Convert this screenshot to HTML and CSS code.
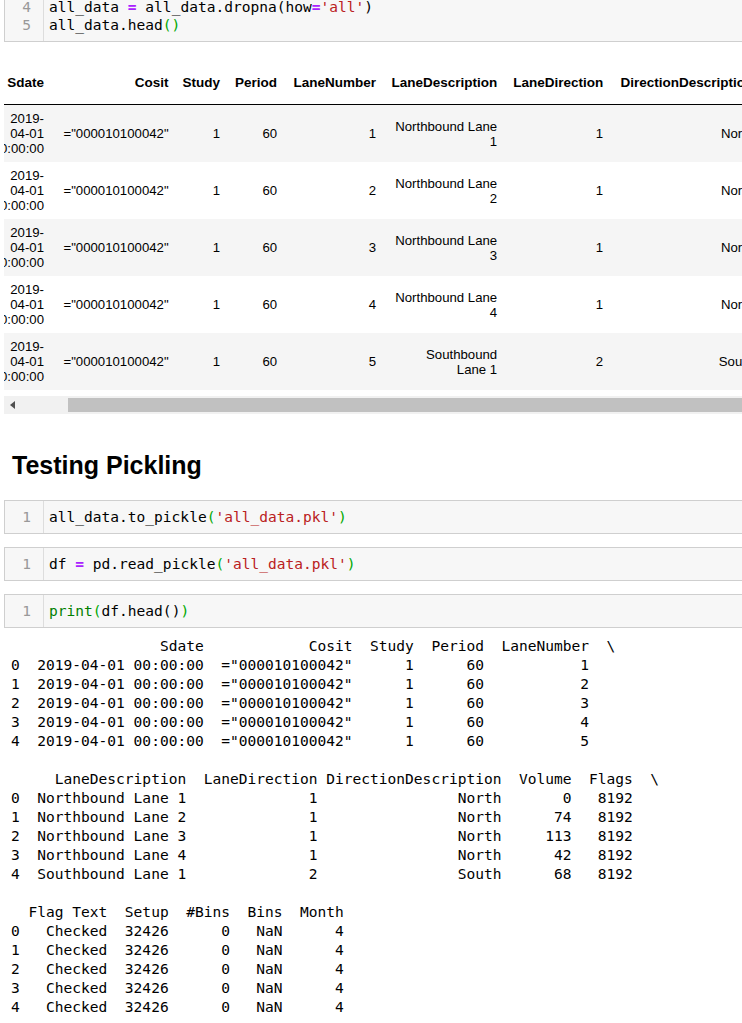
FILE: index.html
```html
<!DOCTYPE html>
<html>
<head>
<meta charset="utf-8">
<title>Notebook</title>
<link rel="stylesheet" href="styles.css">
</head>
<body>
<div class="notebook">

  <div class="cell cell-first">
    <div class="gutter"><div>4</div><div>5</div></div>
    <div class="code">
      <div class="line">all_data <span class="op">=</span> all_data.dropna(how<span class="op">=</span><span class="str">'all'</span>)</div>
      <div class="line">all_data.head<span class="br">()</span></div>
    </div>
  </div>

  <div class="df-wrap">
    <table class="dataframe">
      <colgroup>
        <col class="c-sdate"><col class="c-cosit"><col class="c-study"><col class="c-period"><col class="c-lnum"><col class="c-ldesc"><col class="c-ldir"><col class="c-ddesc"><col class="c-vol"><col class="c-flags"><col class="c-ftext"><col class="c-setup"><col class="c-nbins"><col class="c-bins"><col class="c-month">
      </colgroup>
      <thead>
        <tr><th>Sdate</th><th>Cosit</th><th>Study</th><th>Period</th><th>LaneNumber</th><th>LaneDescription</th><th>LaneDirection</th><th>DirectionDescription</th><th>Volume</th><th>Flags</th><th>Flag Text</th><th>Setup</th><th>#Bins</th><th>Bins</th><th>Month</th></tr>
      </thead>
      <tbody>
        <tr><td>2019-<br>04-01<br>00:00:00</td><td>="000010100042"</td><td>1</td><td>60</td><td>1</td><td>Northbound Lane<br>1</td><td>1</td><td>North</td><td>0</td><td>8192</td><td>Checked</td><td>32426</td><td>0</td><td>NaN</td><td>4</td></tr>
        <tr><td>2019-<br>04-01<br>00:00:00</td><td>="000010100042"</td><td>1</td><td>60</td><td>2</td><td>Northbound Lane<br>2</td><td>1</td><td>North</td><td>74</td><td>8192</td><td>Checked</td><td>32426</td><td>0</td><td>NaN</td><td>4</td></tr>
        <tr><td>2019-<br>04-01<br>00:00:00</td><td>="000010100042"</td><td>1</td><td>60</td><td>3</td><td>Northbound Lane<br>3</td><td>1</td><td>North</td><td>113</td><td>8192</td><td>Checked</td><td>32426</td><td>0</td><td>NaN</td><td>4</td></tr>
        <tr><td>2019-<br>04-01<br>00:00:00</td><td>="000010100042"</td><td>1</td><td>60</td><td>4</td><td>Northbound Lane<br>4</td><td>1</td><td>North</td><td>42</td><td>8192</td><td>Checked</td><td>32426</td><td>0</td><td>NaN</td><td>4</td></tr>
        <tr><td>2019-<br>04-01<br>00:00:00</td><td>="000010100042"</td><td>1</td><td>60</td><td>5</td><td>Southbound<br>Lane 1</td><td>2</td><td>South</td><td>68</td><td>8192</td><td>Checked</td><td>32426</td><td>0</td><td>NaN</td><td>4</td></tr>
      </tbody>
    </table>
  </div>
  <div class="hscroll">
    <div class="hscroll-btn"><span class="arrow-left"></span></div>
    <div class="hscroll-thumb"></div>
  </div>

  <h2 class="section-title">Testing Pickling</h2>

  <div class="cell cell-after-title">
    <div class="gutter"><div>1</div></div>
    <div class="code">
      <div class="line">all_data.to_pickle<span class="br">(</span><span class="str">'all_data.pkl'</span><span class="br">)</span></div>
    </div>
  </div>

  <div class="cell cell-gap">
    <div class="gutter"><div>1</div></div>
    <div class="code">
      <div class="line">df <span class="op">=</span> pd.read_pickle<span class="br">(</span><span class="str">'all_data.pkl'</span><span class="br">)</span></div>
    </div>
  </div>

  <div class="cell cell-gap">
    <div class="gutter"><div>1</div></div>
    <div class="code">
      <div class="line"><span class="builtin">print</span><span class="br">(</span>df.head()<span class="br">)</span></div>
    </div>
  </div>

<pre class="stdout">                 Sdate            Cosit  Study  Period  LaneNumber  \
0  2019-04-01 00:00:00  ="000010100042"      1      60           1   
1  2019-04-01 00:00:00  ="000010100042"      1      60           2   
2  2019-04-01 00:00:00  ="000010100042"      1      60           3   
3  2019-04-01 00:00:00  ="000010100042"      1      60           4   
4  2019-04-01 00:00:00  ="000010100042"      1      60           5   

     LaneDescription  LaneDirection DirectionDescription  Volume  Flags  \
0  Northbound Lane 1              1                North       0   8192   
1  Northbound Lane 2              1                North      74   8192   
2  Northbound Lane 3              1                North     113   8192   
3  Northbound Lane 4              1                North      42   8192   
4  Southbound Lane 1              2                South      68   8192   

  Flag Text  Setup  #Bins  Bins  Month  
0   Checked  32426      0   NaN      4  
1   Checked  32426      0   NaN      4  
2   Checked  32426      0   NaN      4  
3   Checked  32426      0   NaN      4  
4   Checked  32426      0   NaN      4  </pre>

</div>
</body>
</html>
```

FILE: styles.css
```css
html, body {
  margin: 0;
  padding: 0;
  overflow: hidden;
  background: #ffffff;
}

.notebook {
  width: 820px;
  padding-left: 4px;
  display: flex;
  flex-direction: column;
  color: #000;
}

/* ---------- code cells ---------- */
.cell {
  display: flex;
  background: #f7f7f7;
  border: 1px solid #cfcfcf;
  font-family: "DejaVu Sans Mono", "Liberation Mono", monospace;
  font-size: 14.55px;
  line-height: 18px;
  color: #000;
}

.cell-first {
  margin-top: -10px;
}

.cell-after-title {
  margin-top: 20px;
}

.cell-gap {
  margin-top: 13px;
}

.gutter {
  width: 39px;
  box-sizing: border-box;
  padding: 7px 12px 7px 0;
  text-align: right;
  color: #999999;
  border-right: 1px solid #dddddd;
  flex-shrink: 0;
}

.code {
  padding: 7px 0 7px 5px;
  flex: 1;
}

.line {
  white-space: pre;
}

.op { color: #aa22ff; font-weight: bold; }
.str { color: #ba2121; }
.br { color: #00a800; }
.builtin { color: #008000; }

/* ---------- dataframe output ---------- */
.df-wrap {
  margin-top: 27px;
  overflow: hidden;
}

.dataframe {
  table-layout: fixed;
  border-collapse: collapse;
  border-spacing: 0;
  margin-left: -22.5px;
  width: 1219.5px;
  font-family: "Liberation Sans", Arial, sans-serif;
  color: #000;
}

.c-sdate  { width: 70px; }
.c-cosit  { width: 124.5px; }
.c-study  { width: 51.5px; }
.c-period { width: 57px; }
.c-lnum   { width: 99px; }
.c-ldesc  { width: 121px; }
.c-ldir   { width: 106px; }
.c-ddesc  { width: 150px; }
.c-vol    { width: 70px; }
.c-flags  { width: 60px; }
.c-ftext  { width: 80px; }
.c-setup  { width: 60px; }
.c-nbins  { width: 60px; }
.c-bins   { width: 50px; }
.c-month  { width: 60px; }

.dataframe th {
  font-size: 13.5px;
  font-weight: bold;
  line-height: 15px;
  text-align: right;
  vertical-align: top;
  padding: 6px 7.5px 14px 0;
  white-space: nowrap;
  border-bottom: 1px solid #000;
}

.dataframe td {
  font-size: 13.2px;
  line-height: 15px;
  text-align: right;
  vertical-align: middle;
  padding: 6px 7.5px 6px 0;
  white-space: nowrap;
  height: 45px;
}

.dataframe tbody tr:nth-child(odd) {
  background: #f5f5f5;
}

/* ---------- horizontal scrollbar ---------- */
.hscroll {
  margin-top: 6px;
  height: 18px;
  background: #f1f1f1;
  display: flex;
  align-items: stretch;
}

.hscroll-btn {
  width: 17px;
  display: flex;
  align-items: center;
  justify-content: center;
  flex-shrink: 0;
}

.arrow-left {
  width: 0;
  height: 0;
  border-top: 4.5px solid transparent;
  border-bottom: 4.5px solid transparent;
  border-right: 5px solid #505050;
}

.hscroll-thumb {
  flex: 1;
  margin: 2px 0 2px 47px;
  background: #c1c1c1;
}

/* ---------- markdown heading ---------- */
.section-title {
  margin: 36px 0 0 8px;
  font-family: "Liberation Sans", Arial, sans-serif;
  font-size: 25px;
  line-height: 30px;
  font-weight: bold;
  color: #000;
}

/* ---------- stream output ---------- */
.stdout {
  margin: 8px 0 0 7px;
  font-family: "DejaVu Sans Mono", "Liberation Mono", monospace;
  font-size: 14.55px;
  line-height: 19px;
  color: #000;
}
```
